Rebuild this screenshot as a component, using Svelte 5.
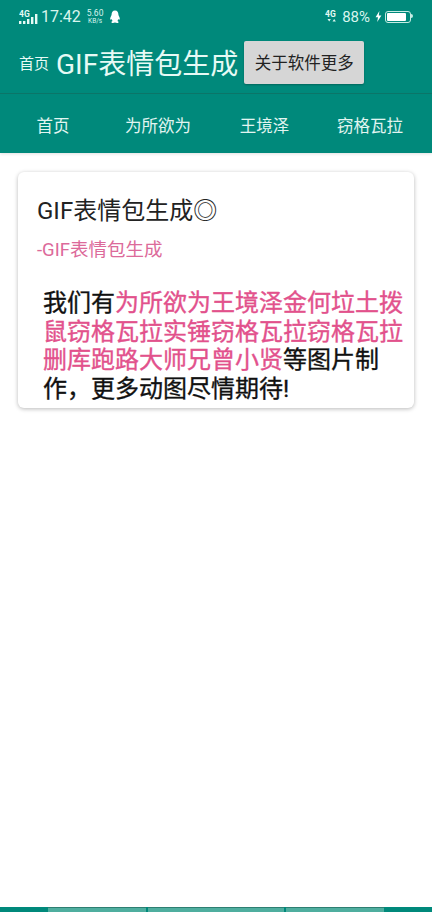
<script lang="ts">
  const tabs = ['首页', '为所欲为', '王境泽', '窃格瓦拉']
</script>

<div class="page">
  <header class="top">
    <div class="status">
      <div class="status-left">
        <svg class="signal" width="20" height="16" viewBox="0 0 20 16">
          <text x="0" y="7.5" class="net">4G</text>
          <rect x="0" y="12" width="2.4" height="3" />
          <rect x="4" y="12" width="2.4" height="3" />
          <rect x="8" y="10" width="2.4" height="5" />
          <rect x="12" y="8" width="2.4" height="7" />
          <rect x="16" y="5" width="2.4" height="10" />
        </svg>
        <span class="time">17:42</span>
        <span class="speed"><span>5.60</span><span class="unit">KB/s</span></span>
        <svg class="qq" width="12" height="14" viewBox="0 0 12 14">
          <path d="M6 0.5C3.6 0.5 2.6 2.3 2.6 4.4 2.6 5 2.4 5.4 2 6.2 1.3 7.5 0.9 9 1.4 9.6 1.8 9.9 2.3 9.4 2.6 9 2.8 9.9 3.2 10.5 3.7 11 2.8 11.3 2.3 11.8 2.5 12.4 2.8 13.2 4.6 13.2 6 12.6 7.4 13.2 9.2 13.2 9.5 12.4 9.7 11.8 9.2 11.3 8.3 11 8.8 10.5 9.2 9.9 9.4 9 9.7 9.4 10.2 9.9 10.6 9.6 11.1 9 10.7 7.5 10 6.2 9.6 5.4 9.4 5 9.4 4.4 9.4 2.3 8.4 0.5 6 0.5Z" fill="#fff" />
        </svg>
      </div>
      <div class="status-right">
        <svg width="14" height="16" viewBox="0 0 14 16">
          <text x="0" y="7.5" class="net">4G</text>
          <path d="M2.5 10h3.4l-1.7 2.6zM7.5 12.6h3.4l-1.7-2.6z" fill="#d8f5ee" />
        </svg>
        <span class="battery-pct">88%</span>
        <svg class="bolt" width="7" height="11" viewBox="0 0 7 11">
          <path d="M4.4 0 0.6 6.2h2.4L2.2 11 6.4 4.4H3.8z" fill="#fff" />
        </svg>
        <div class="battery"><div class="battery-fill" style="width: 88%"></div></div>
      </div>
    </div>

    <div class="bar">
      <span class="home">首页</span>
      <span class="title">GIF表情包生成</span>
      <button class="about">关于软件更多</button>
    </div>

    <nav class="tabs">
      {#each tabs as tab}
        <span class="tab">{tab}</span>
      {/each}
    </nav>
  </header>

  <main class="content">
    <section class="card">
      <h2>GIF表情包生成◎</h2>
      <p class="sub">-GIF表情包生成</p>
      <p class="body">我们有<span class="hl">为所欲为王境泽金何垃土拨鼠窃格瓦拉实锤窃格瓦拉窃格瓦拉删库跑路大师兄曾小贤</span>等图片制作，更多动图尽情期待!</p>
    </section>
  </main>

  <div class="bottom">
    <div class="seg"></div>
    <div class="seg"></div>
    <div class="seg"></div>
  </div>
</div>

<style>
  :global(body) {
    margin: 0;
    background: #fff;
  }

  .page {
    width: 432px;
    height: 912px;
    display: flex;
    flex-direction: column;
    overflow: hidden;
    font-family: "Roboto", "Noto Sans CJK SC", sans-serif;
  }

  .top {
    background: #00897b;
    color: #fff;
    box-shadow: 0 1px 3px rgba(0, 0, 0, 0.12);
  }

  .status {
    height: 31px;
    padding: 2px 19px 0 19px;
    box-sizing: border-box;
    display: flex;
    justify-content: space-between;
    align-items: center;
    color: #d8f5ee;
  }

  .status-left,
  .status-right {
    display: flex;
    align-items: center;
  }

  .signal {
    fill: #e6faf5;
  }

  .net {
    font-size: 8.5px;
    font-weight: 700;
    font-family: "Roboto", sans-serif;
    fill: #e6faf5;
  }

  .time {
    margin-left: 2px;
    font-size: 16px;
    color: #d8f5ee;
  }

  .speed {
    margin-left: 6px;
    display: flex;
    flex-direction: column;
    font-size: 8.5px;
    line-height: 9px;
    align-items: center;
  }

  .unit {
    font-size: 6.5px;
    line-height: 7px;
  }

  .qq {
    margin-left: 6px;
  }

  .battery-pct {
    font-size: 15px;
    margin-left: 3px;
  }

  .bolt {
    margin-left: 5px;
  }

  .battery {
    position: relative;
    width: 22px;
    height: 8px;
    margin-left: 3px;
    margin-right: 2px;
    border: 1px solid #c6ece4;
    border-radius: 3px;
    padding: 1px;
  }

  .battery::after {
    content: "";
    position: absolute;
    right: -3px;
    top: 2px;
    width: 2px;
    height: 4px;
    background: #c6ece4;
    border-radius: 0 2px 2px 0;
  }

  .battery-fill {
    height: 100%;
    background: #fff;
    border-radius: 1px;
  }

  .bar {
    height: 63px;
    padding: 0 0 0 19px;
    display: flex;
    align-items: center;
    border-bottom: 1px solid #0b7568;
    box-sizing: border-box;
  }

  .home {
    font-size: 15px;
    color: #e6faf5;
  }

  .title {
    margin-left: 7px;
    font-size: 28px;
    color: #e6faf5;
    white-space: nowrap;
  }

  .about {
    margin-left: 6px;
    width: 120px;
    height: 43px;
    flex: none;
    border: none;
    padding: 0;
    border-radius: 2px;
    background: #d6d6d6;
    color: #222;
    font: inherit;
    font-size: 16.5px;
    box-shadow: 0 1px 2px rgba(0, 0, 0, 0.25);
  }

  .tabs {
    height: 59px;
    padding: 2px 11px 0 0;
    box-sizing: border-box;
    display: grid;
    grid-template-columns: 106px 104px 109px 102px;
    align-items: center;
    font-size: 16.5px;
    color: #e2f5f1;
  }

  .tab {
    text-align: center;
    white-space: nowrap;
  }

  .content {
    flex: 1;
    padding: 19px 18px 0;
  }

  .card {
    height: 236px;
    box-sizing: border-box;
    padding: 22px 4px 0 19px;
    border-radius: 6px;
    background: #fff;
    box-shadow: 0 1px 4px rgba(0, 0, 0, 0.28);
  }

  h2 {
    margin: 0;
    font-size: 24px;
    font-weight: 400;
    line-height: 34px;
    color: #222;
  }

  .sub {
    margin: 10px 0 0;
    font-size: 18.5px;
    line-height: 24px;
    color: #dc6a9a;
  }

  .body {
    margin: 27px 0 0 6px;
    font-size: 24px;
    line-height: 28.5px;
    font-weight: 400;
    -webkit-text-stroke: 0.35px currentColor;
    color: #111;
  }

  .hl {
    color: #e2518c;
  }

  .bottom {
    height: 5px;
    background: #00897b;
    display: grid;
    grid-template-columns: 98px 136px 98px;
    gap: 2px;
    padding: 0 48px;
  }

  .seg {
    background: #4fae9f;
    border-top: 1px solid #2d7f72;
  }
</style>
